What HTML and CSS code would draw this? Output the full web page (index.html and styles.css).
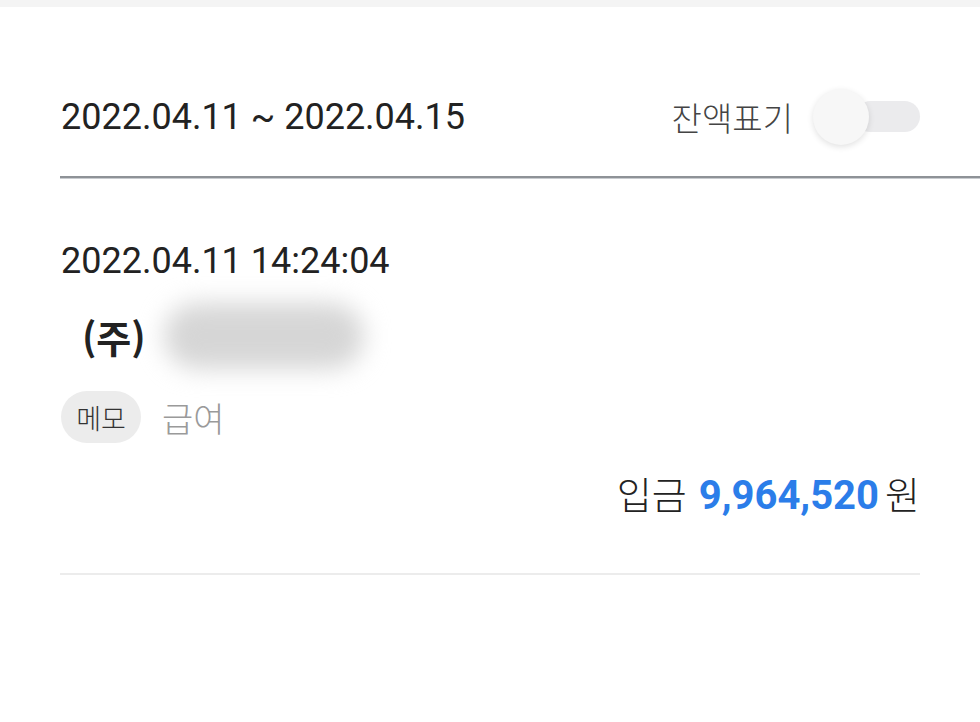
FILE: index.html
```html
<!DOCTYPE html>
<html lang="ko">
<head>
<meta charset="utf-8">
<link rel="stylesheet" href="styles.css">
</head>
<body>
<div class="topband"></div>
<div class="header">
  <div class="range">2022.04.11 ~ 2022.04.15</div>
  <div class="balance">
    <span class="balance-label">잔액표기</span>
    <span class="toggle"><span class="knob"></span></span>
  </div>
</div>
<div class="divider"></div>
<div class="item">
  <div class="datetime">2022.04.11 14:24:04</div>
  <div class="name">
    <span class="corp">(주)</span>
    <span class="blur"></span>
  </div>
  <div class="memo-row">
    <span class="chip">메모</span>
    <span class="memo">급여</span>
  </div>
  <div class="amount-row">
    <span class="kind">입금</span>
    <span class="amount">9,964,520</span>
    <span class="won">원</span>
  </div>
</div>
<div class="bottom-line"></div>
</body>
</html>
```

FILE: styles.css
```css
* { box-sizing: border-box; }
html, body { margin: 0; padding: 0; background: #ffffff; }
body {
  width: 980px;
  height: 722px;
  overflow: hidden;
  font-family: Roboto, "Noto Sans CJK KR", sans-serif;
  color: #222222;
}
.topband { height: 7px; background: #f4f4f4; }
.header {
  display: flex;
  align-items: center;
  justify-content: space-between;
  height: 169px;
  padding: 50px 60px 0 61px;
}
.range {
  font-size: 36px;
  color: #222;
}
.balance { display: flex; align-items: center; }
.balance-label {
  font-family: "Noto Sans CJK KR", sans-serif;
  font-weight: 300;
  font-size: 33px;
  color: #444;
  margin-right: 20px;
}
.toggle {
  position: relative;
  display: block;
  width: 107px;
  height: 31px;
}
.toggle::before {
  content: "";
  position: absolute;
  left: 42px;
  right: 0;
  top: 0;
  bottom: 0;
  background: #ebebed;
  border-radius: 16px;
}
.knob {
  position: absolute;
  left: 0;
  top: -12px;
  width: 56px;
  height: 56px;
  border-radius: 50%;
  background: #f7f7f7;
  box-shadow: 0 2px 6px rgba(0,0,0,0.12);
}
.divider {
  height: 3px;
  margin-left: 60px;
  background: #8e9297;
  border-bottom: 1px solid #c9ccd0;
}
.item { padding: 58px 60px 0 61px; }
.datetime { font-size: 36px; color: #222; line-height: 48px; }
.name { display: flex; align-items: center; height: 90px; margin-top: 6px; }
.corp {
  font-family: "Noto Sans CJK KR", sans-serif;
  font-weight: 700;
  font-size: 38px;
  margin-left: 21px;
  color: #222;
}
.blur {
  display: block;
  width: 200px;
  height: 66px;
  margin-left: 18px;
  background: #d6d6d6;
  border-radius: 33px;
  filter: blur(12px);
}
.memo-row { display: flex; align-items: center; margin-top: 10px; }
.chip {
  font-family: "Noto Sans CJK KR", sans-serif;
  font-weight: 300;
  display: inline-flex;
  align-items: center;
  justify-content: center;
  width: 80px;
  height: 52px;
  border-radius: 26px;
  background: #ececec;
  font-size: 27px;
  color: #333;
}
.memo {
  font-family: "Noto Sans CJK KR", sans-serif;
  font-weight: 300;
  font-size: 34px;
  color: #9a9a9a;
  margin-left: 21px;
}
.amount-row {
  display: flex;
  justify-content: flex-end;
  align-items: baseline;
  margin-top: 22px;
  height: 60px;
}
.kind {
  font-family: "Noto Sans CJK KR", sans-serif;
  font-weight: 300;
  font-size: 38px;
  color: #222;
}
.amount {
  font-weight: 700;
  font-size: 40px;
  color: #2b7de9;
  margin-left: 12px;
}
.won {
  font-family: "Noto Sans CJK KR", sans-serif;
  font-weight: 300;
  font-size: 38px;
  color: #222;
  margin-left: 6px;
}
.bottom-line {
  height: 2px;
  margin: 48px 60px 0 60px;
  background: #ececec;
}
```
